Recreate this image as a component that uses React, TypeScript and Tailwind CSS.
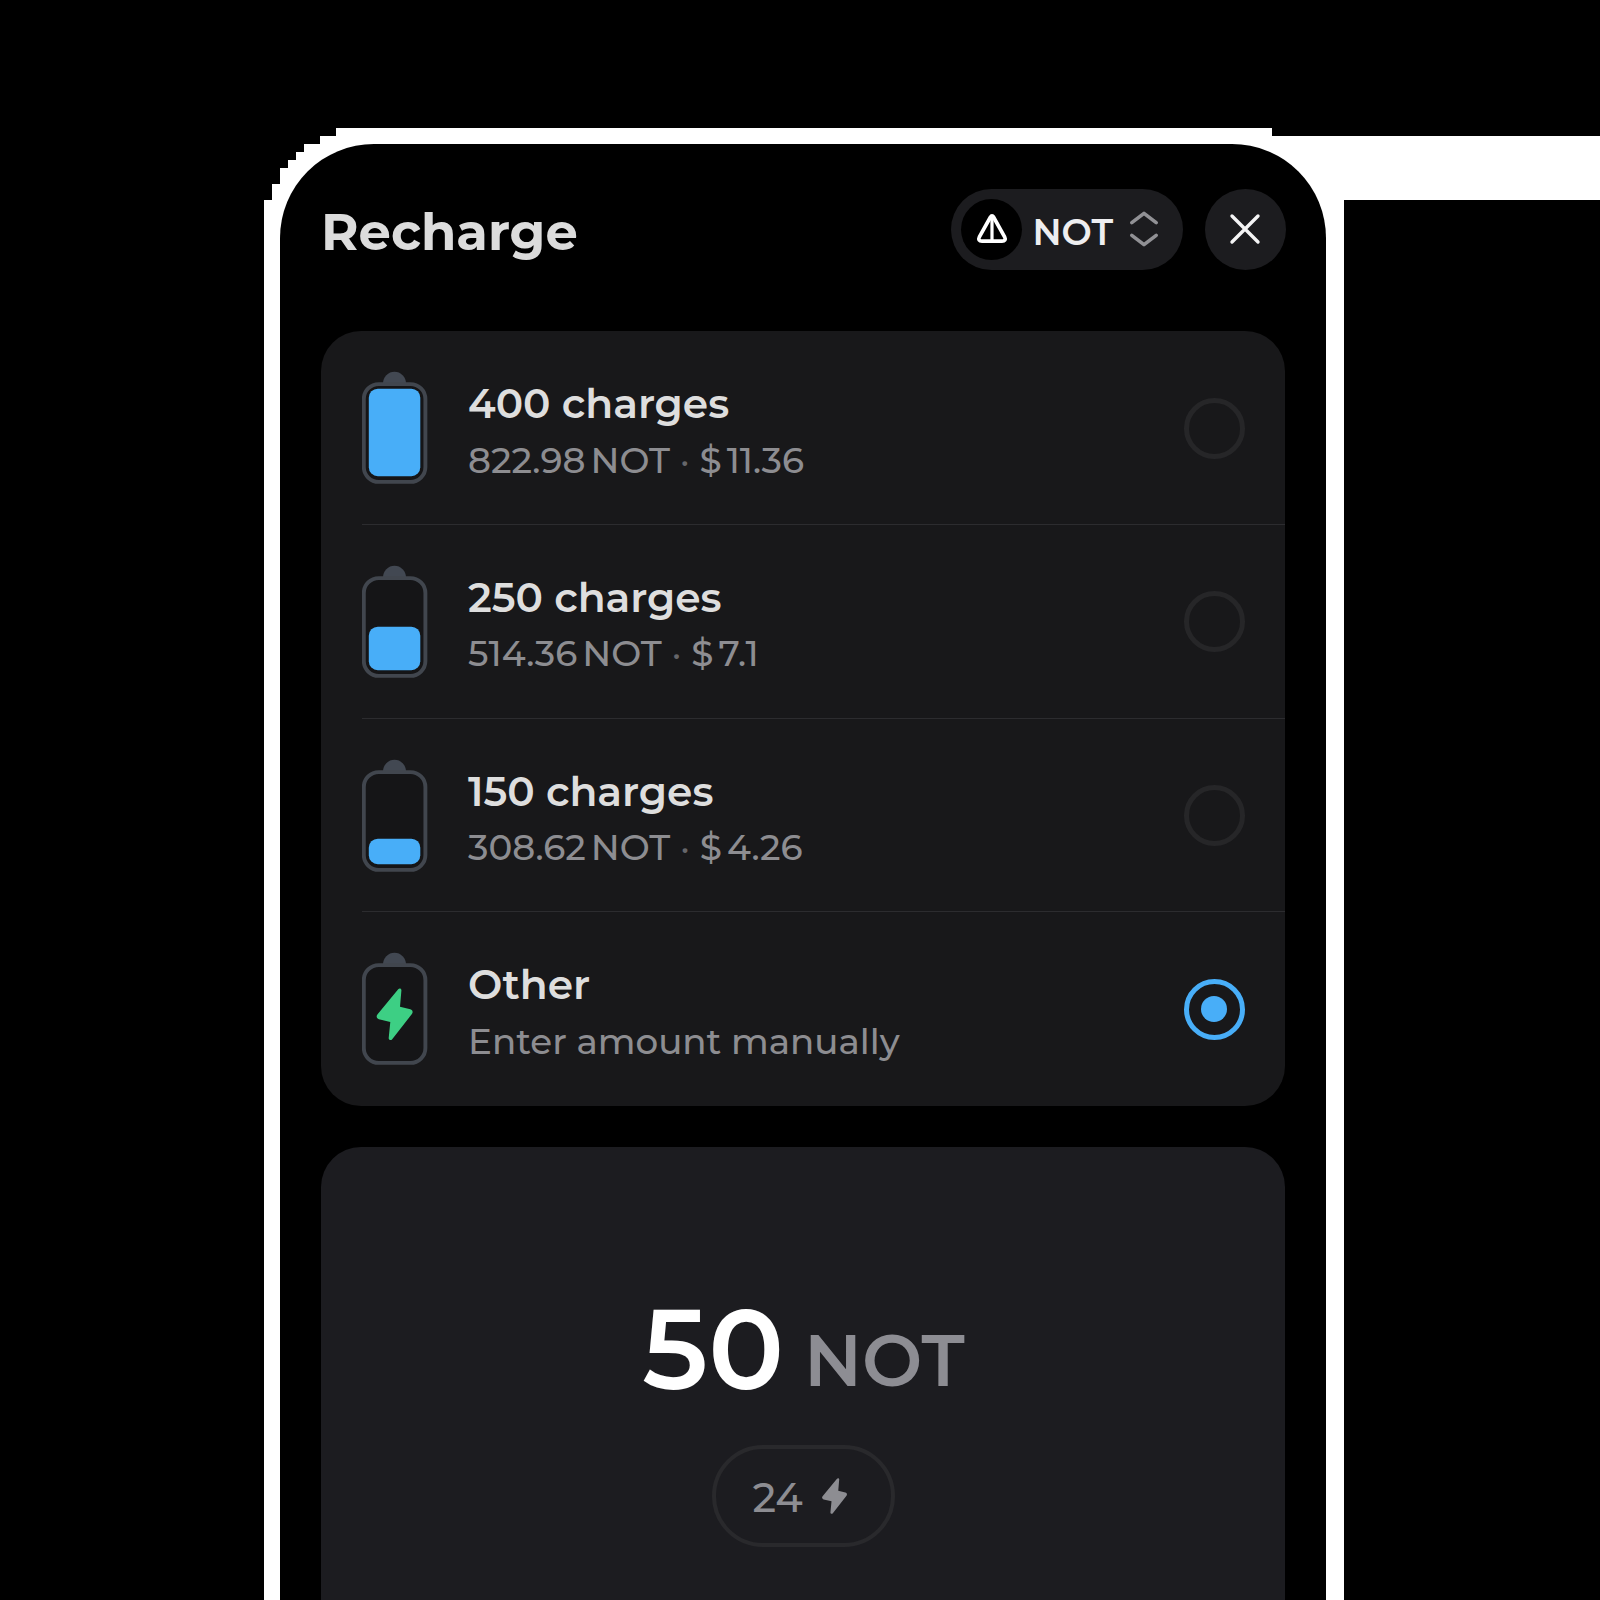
const BOLT =
  'M21.6 1C22.8 -0.5 24.9 0.2 24.8 2.1L23.4 18.4L33.7 20.9C36 21.5 36.7 23.7 35.3 25.7L15.6 50.9C14.4 52.4 12 51.8 12.1 49.8L13.7 33.6L2.3 30.9C0 30.3 -0.6 28.2 0.8 26.2Z';

type Plan = {
  title: string;
  price?: { amount: string; usd: string };
  note?: string;
  level: number;
  selected?: boolean;
};

const plans: Plan[] = [
  { title: '400 charges', price: { amount: '822.98', usd: '11.36' }, level: 87.5 },
  { title: '250 charges', price: { amount: '514.36', usd: '7.1' }, level: 43.5 },
  { title: '150 charges', price: { amount: '308.62', usd: '4.26' }, level: 25.5 },
  { title: 'Other', note: 'Enter amount manually', level: 0, selected: true },
];

function Battery({ level, bolt }: { level: number; bolt?: boolean }) {
  return (
    <svg width="66" height="113" viewBox="0 0 66 113" className="block shrink-0">
      <path d="M21 12.5V12.3a11.5 11.5 0 0 1 23 0V12.5Z" fill="#424852" />
      <rect x="1.8" y="13.1" width="61.6" height="97.8" rx="15" fill="#151517" stroke="#41464e" strokeWidth="3.9" />
      {level > 0 && <rect x="6.8" y={105.2 - level} width="51.5" height={level} rx="9" fill="#48aef8" />}
      {bolt && <path d={BOLT} transform="translate(14.6 36.3)" fill="#3dcf84" />}
    </svg>
  );
}

function Radio({ selected }: { selected?: boolean }) {
  return selected ? (
    <div className="flex size-[61px] shrink-0 items-center justify-center rounded-full border-5 border-[#48aef8]">
      <div className="size-[26px] rounded-full bg-[#48aef8]" />
    </div>
  ) : (
    <div className="size-[61px] shrink-0 rounded-full border-5 border-[#262628]" />
  );
}

function PlanRow({ plan, last }: { plan: Plan; last: boolean }) {
  return (
    <div className={`ml-[41px] flex h-[193.75px] pr-[40.5px] ${last ? '' : 'border-b border-[#2c2c2f]'}`}>
      <div className="pt-10">
        <Battery level={plan.level} bolt={plan.selected} />
      </div>
      <div className="ml-[40px] flex-1 pt-[44px] whitespace-nowrap">
        <div className="text-[40.75px] leading-[58px] font-semibold text-[#dedede]">{plan.title}</div>
        <div className="mt-[1.5px] flex text-[35.7px] leading-[50px] font-medium text-[#8d8d91]">
          {plan.price ? (
            <>
              <span>{plan.price.amount}</span>
              <span className="ml-[5px]">NOT</span>
              <span className="w-[29.5px] text-center text-[#66666a]">·</span>
              <span>$</span>
              <span className="ml-[5px]">{plan.price.usd}</span>
            </>
          ) : (
            <span>{plan.note}</span>
          )}
        </div>
      </div>
      <div className="pt-[66.5px]">
        <Radio selected={plan.selected} />
      </div>
    </div>
  );
}

function Header() {
  return (
    <header className="flex h-[187px] items-start pt-[44px] pr-10 pl-[41px]">
      <h1 className="pt-[10px] text-[51.2px] leading-[68px] font-bold text-[#dcdcdc]">Recharge</h1>
      <button className="mt-[0.5px] ml-auto flex h-[81.5px] w-[232px] items-center rounded-full bg-[#1c1c1f] pl-[10px]">
        <span className="flex size-[61px] items-center justify-center rounded-full bg-black">
          <svg width="32" height="34" viewBox="0 0 32 34" fill="none" stroke="#fff" strokeLinecap="round" strokeLinejoin="round">
            <path
              d="M14.5 5L3.4 24.8C2 27.4 3.2 29.2 6 29.2H26C28.8 29.2 30 27.4 28.6 24.8L17.5 5C16.7 3.5 15.3 3.5 14.5 5Z"
              strokeWidth="3.7"
            />
            <path d="M16 5V29" strokeWidth="3.2" />
          </svg>
        </span>
        <span className="ml-[10.5px] pt-[5.5px] text-[35.9px] leading-[50px] font-semibold text-[#eeeef0]">NOT</span>
        <svg width="30" height="38" viewBox="0 0 30 38" className="ml-[15.5px]" fill="none" stroke="#919195" strokeWidth="3.6" strokeLinecap="round" strokeLinejoin="round">
          <path d="M2.8 12.6L15 3.4L27.2 12.6M2.8 25.4L15 34.6L27.2 25.4" />
        </svg>
      </button>
      <button className="mt-[0.5px] ml-[21.5px] flex size-[81.5px] items-center justify-center rounded-full bg-[#1c1c1f]">
        <svg width="32" height="32" viewBox="0 0 32 32" fill="none" stroke="#f4f4f5" strokeWidth="3.4" strokeLinecap="round">
          <path d="M3 3L29 29M29 3L3 29" />
        </svg>
      </button>
    </header>
  );
}

function AmountCard() {
  return (
    <section className="mx-auto mt-[41px] flex h-[620px] w-[964px] flex-col items-center rounded-[40px] bg-[#1c1c20] pt-[134px]">
      <div className="flex h-[136px] items-baseline gap-[20px] pl-[1px] font-semibold">
        <span className="text-[112.7px] leading-[136px] text-white">50</span>
        <span className="relative -top-[3px] text-[71.6px] leading-[90px] text-[#8d8d93]">NOT</span>
      </div>
      <div className="mt-[28px] flex h-[102px] w-[183px] items-center rounded-full border-4 border-[#29292c] pl-[37px]">
        <span className="pt-[1.5px] text-[41px] leading-[56px] font-medium text-[#8d8d92]">24</span>
        <svg width="25" height="36" viewBox="0 0 36 52" className="ml-[19px]">
          <path d={BOLT} fill="#8d8d92" />
        </svg>
      </div>
    </section>
  );
}

export default function App() {
  return (
    <div className="h-[1600px] w-[1600px] overflow-hidden bg-black font-['Montserrat','Inter',sans-serif]">
      <div className="h-[1600px] w-[1600px] bg-white pt-[144px] pl-[280px] [clip-path:polygon(264px_1600px,264px_200px,272px_200px,272px_184px,280px_184px,280px_168px,288px_168px,288px_160px,296px_160px,296px_152px,304px_152px,304px_144px,320px_144px,320px_136px,336px_136px,336px_128px,1272px_128px,1272px_136px,1600px_136px,1600px_200px,1344px_200px,1344px_1600px)]">
        <main className="h-[1456px] w-[1046px] overflow-hidden rounded-t-[94px] bg-black">
          <Header />
          <section className="mx-auto h-[775px] w-[964px] rounded-[40px] bg-[#18181a]">
            {plans.map((plan, i) => (
              <PlanRow key={plan.title} plan={plan} last={i === plans.length - 1} />
            ))}
          </section>
          <AmountCard />
        </main>
      </div>
    </div>
  );
}
